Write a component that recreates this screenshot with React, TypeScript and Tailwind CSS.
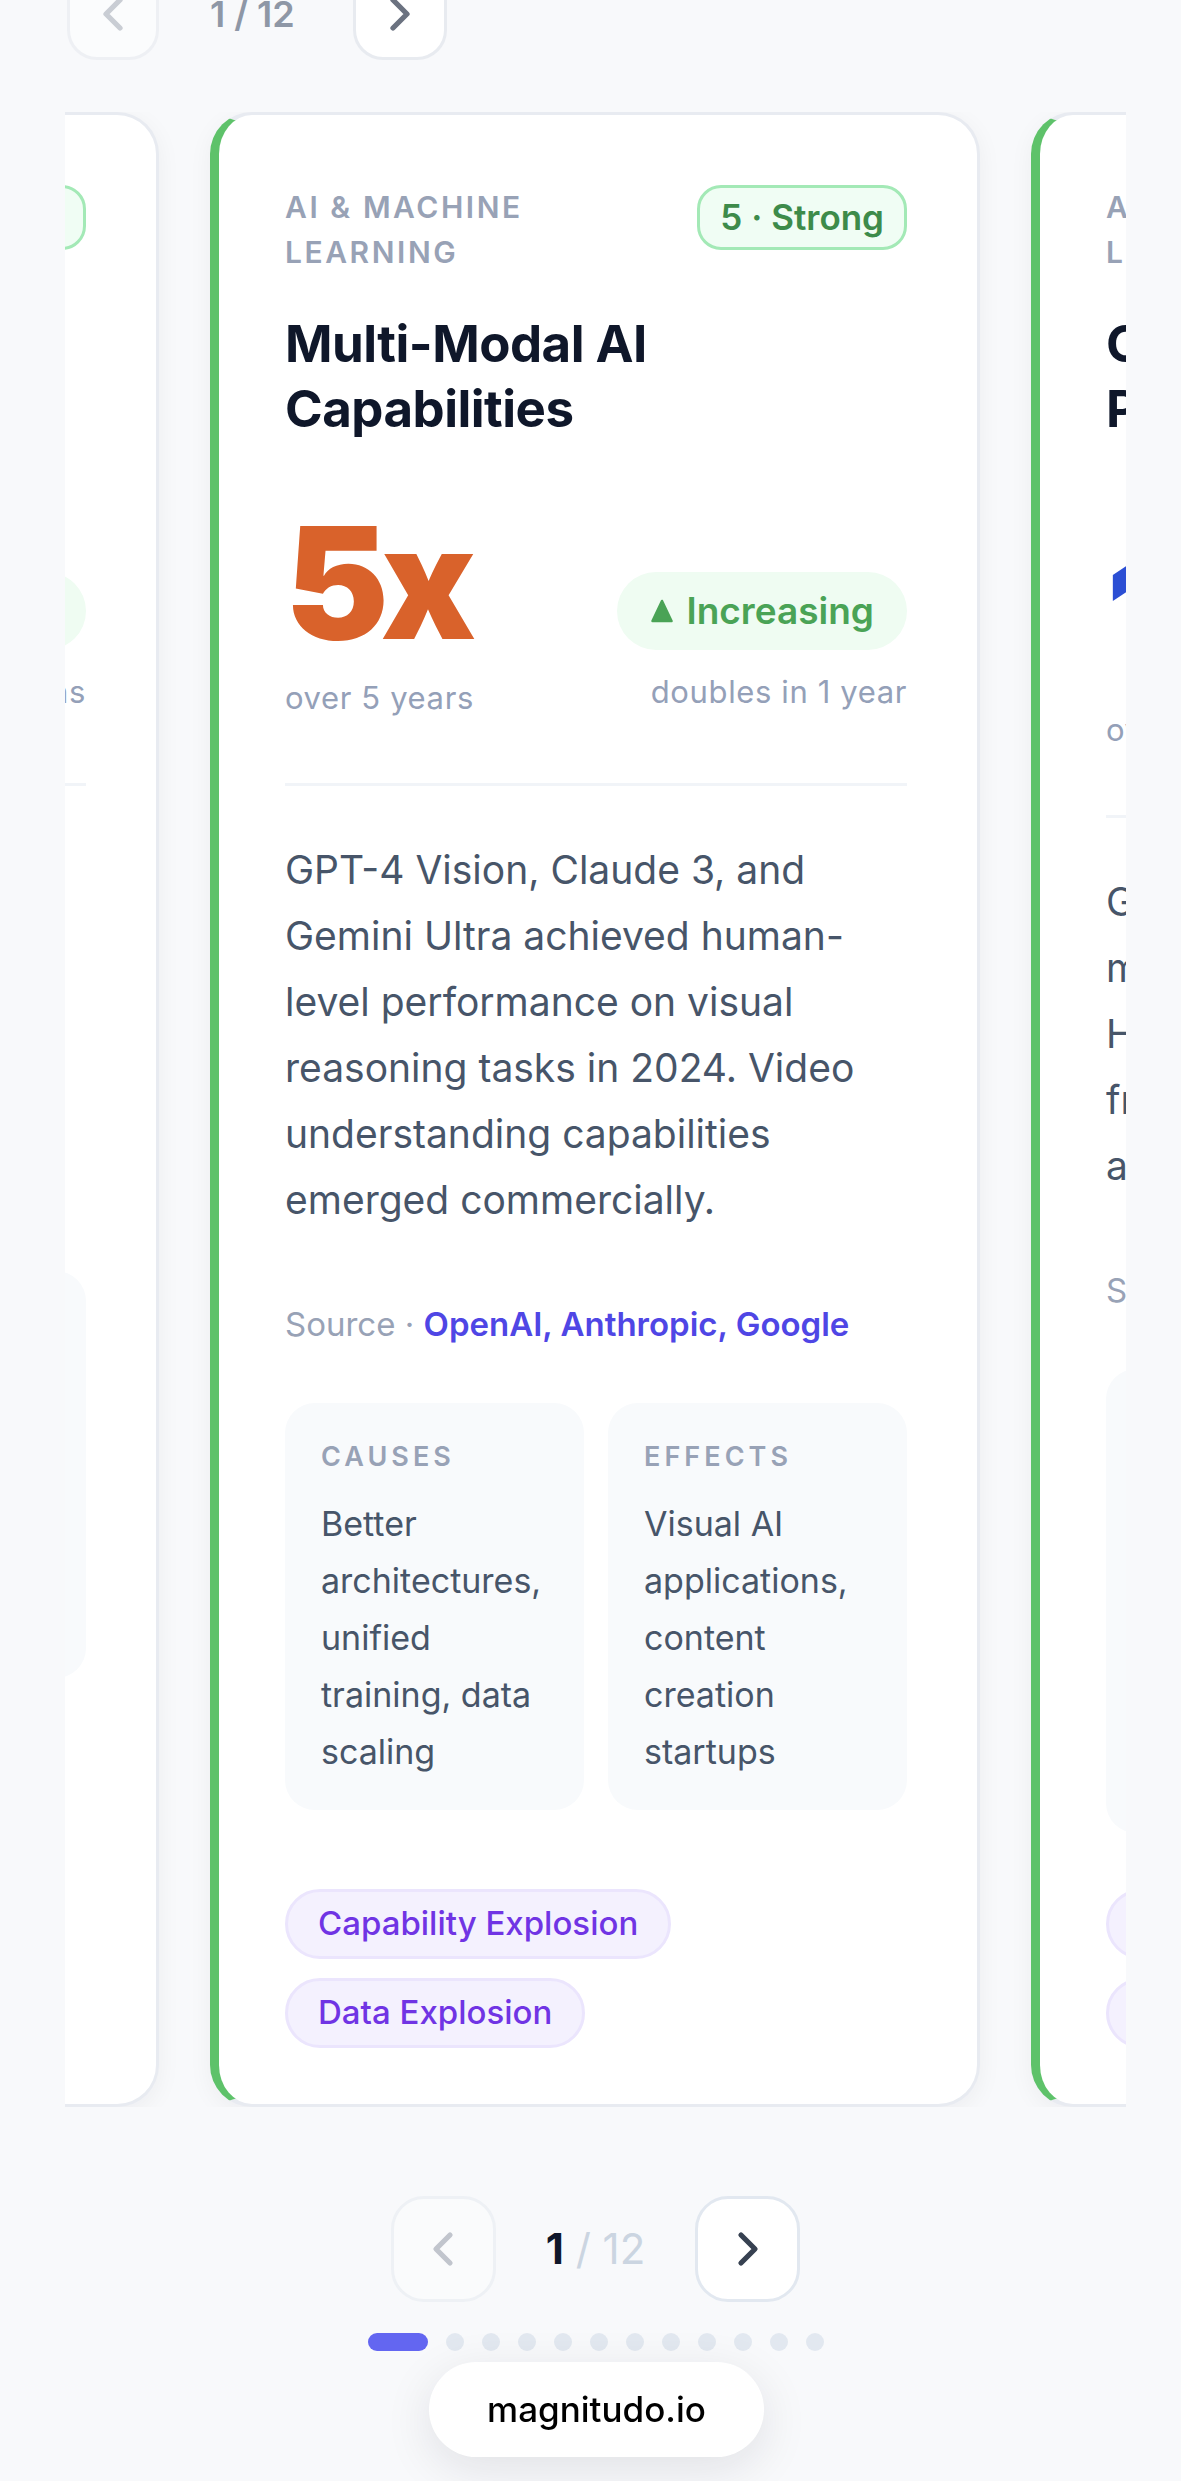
import React from "react";
import { ChevronLeft, ChevronRight } from "lucide-react";

type CardProps = {
  category: string;
  title: string;
  value: string;
  valueClass: string;
  valueSub: string;
  trendSub: string;
  rowClass: string;
  body: React.ReactNode;
  source: string;
  causes: React.ReactNode;
  effects: React.ReactNode;
  tags: string[];
};

function Lines({ items }: { items: string[] }) {
  return (
    <>
      {items.map((l, i) => (
        <React.Fragment key={i}>
          {l}
          {i < items.length - 1 ? <br /> : null}
        </React.Fragment>
      ))}
    </>
  );
}

function Triangle() {
  return (
    <svg width="22" height="24" viewBox="0 0 22 24" className="shrink-0">
      <path d="M11 2 L20.5 22 H1.5 Z" fill="currentColor" stroke="currentColor" strokeWidth="2.5" strokeLinejoin="round" />
    </svg>
  );
}

function Card(p: CardProps) {
  return (
    <div className="w-[770px] h-[1995px] shrink-0 flex flex-col bg-white rounded-[42px] border-[3px] border-[#e8ebf1] border-l-[9px] border-l-[#5ec26a] pl-[66px] pr-[70px] pt-[70px] pb-[56px] shadow-[0_6px_24px_rgba(15,23,42,0.05)]">
      <div className="flex items-start justify-between gap-[24px]">
        <div className="max-w-[330px] text-[30px] leading-[45px] font-semibold tracking-[0.085em] text-[#98a2b6]">
          {p.category}
        </div>
        <div className="h-[65px] px-[20px] flex items-center rounded-[24px] border-[3px] border-[#a3e9b6] bg-[#f0fdf4] text-[35px] font-semibold text-[#3d8b4a] whitespace-nowrap">
          5 · Strong
        </div>
      </div>
      <h2 className="mt-[36px] text-[51px] leading-[65px] font-bold text-[#0f172a] tracking-[-0.01em]">
        {p.title}
      </h2>
      <div className={p.rowClass}>
        <div>
          <div className={p.valueClass}>{p.value}</div>
          <div className="mt-[16px] text-[31px] leading-[42px] tracking-[0.02em] text-[#94a0b8]">{p.valueSub}</div>
        </div>
        <div className="flex flex-col items-end pb-[6px]">
          <div className="h-[78px] pl-[34px] pr-[33px] rounded-full bg-[#effcf2] flex items-center gap-[13px] text-[37px] font-semibold text-[#4aa356] whitespace-nowrap">
            <Triangle />
            Increasing
          </div>
          <div className="mt-[21px] text-[31px] leading-[42px] tracking-[0.02em] text-[#94a0b8] whitespace-nowrap">{p.trendSub}</div>
        </div>
      </div>
      <div className="mt-[64px] h-[3px] bg-[#f1f4f8]" />
      <p className="mt-[51px] text-[39px] leading-[66px] text-[#475569]">{p.body}</p>
      <div className="mt-[69px] text-[33px] leading-[45px] text-[#98a2b6]">
        Source · <span className="font-semibold text-[#4f46e5]">{p.source}</span>
      </div>
      <div className="mt-[56px] flex gap-[24px]">
        <div className="flex-1 rounded-[30px] bg-[#f8fafc] px-[36px] pt-[36px] pb-[30px]">
          <div className="text-[27px] leading-[36px] font-semibold tracking-[0.15em] text-[#98a2b6]">CAUSES</div>
          <div className="mt-[20px] text-[34px] leading-[57px] text-[#475569]">{p.causes}</div>
        </div>
        <div className="flex-1 rounded-[30px] bg-[#f8fafc] px-[36px] pt-[36px] pb-[30px]">
          <div className="text-[27px] leading-[36px] font-semibold tracking-[0.15em] text-[#98a2b6]">EFFECTS</div>
          <div className="mt-[20px] text-[34px] leading-[57px] text-[#475569]">{p.effects}</div>
        </div>
      </div>
      <div className="mt-auto flex flex-wrap gap-x-[18px] gap-y-[19px]">
        {p.tags.map((t) => (
          <div
            key={t}
            className="h-[70px] px-[30px] flex items-center rounded-full border-[3px] border-[#ebe5fd] bg-[#f4f1fe] text-[33px] font-medium text-[#7034e4] whitespace-nowrap"
          >
            {t}
          </div>
        ))}
      </div>
    </div>
  );
}

const cards: CardProps[] = [
  {
    category: "AI & MACHINE LEARNING",
    title: "Open-Source Model Performance",
    value: "3x",
    valueClass: "text-[156px] leading-none font-black tracking-[-0.05em] text-[#d9622b]",
    valueSub: "over 2 years",
    trendSub: "in 2 generations",
    rowClass: "mt-[64px] flex items-end justify-between",
    body: <Lines items={["Llama 3 and Mistral models", "closed most of the gap with", "proprietary systems on key", "public benchmarks."]} />,
    source: "Meta, Mistral AI",
    causes: <Lines items={["Open models,", "community", "tuning,", "better data", "curation"]} />,
    effects: <Lines items={["Cheaper", "deployment,", "local", "inference"]} />,
    tags: ["Capability Explosion", "Data Explosion"],
  },
  {
    category: "AI & MACHINE LEARNING",
    title: "Multi-Modal AI Capabilities",
    value: "5x",
    valueClass: "text-[156px] leading-none font-black tracking-[-0.05em] text-[#d9622b]",
    valueSub: "over 5 years",
    trendSub: "doubles in 1 year",
    rowClass: "mt-[64px] flex items-end justify-between",
    body:
      "GPT-4 Vision, Claude 3, and Gemini Ultra achieved human-level performance on visual reasoning tasks in 2024. Video understanding capabilities emerged commercially.",
    source: "OpenAI, Anthropic, Google",
    causes: "Better architectures, unified training, data scaling",
    effects: "Visual AI applications, content creation startups",
    tags: ["Capability Explosion", "Data Explosion"],
  },
  {
    category: "AI & MACHINE LEARNING",
    title: "Generative AI Productivity",
    value: "10x",
    valueClass: "text-[156px] leading-none font-black tracking-[-0.05em] text-[#2c4fd4]",
    valueSub: "over 3 years",
    trendSub: "doubles in 2 years",
    rowClass: "mt-[96px] flex items-end justify-between",
    body: <Lines items={["GitHub Copilot and Cursor let", "millions of developers ship", "How teams write code shifted", "from typing to reviewing", "and orchestrating agents."]} />,
    source: "GitHub, McKinsey",
    causes: <Lines items={["Code", "assistants,", "chat", "interfaces,", "IDE plugins,", "agent tools"]} />,
    effects: <Lines items={["Faster", "shipping, new", "team", "structures"]} />,
    tags: ["Capability Explosion", "Data Explosion"],
  },
];

export default function App() {
  return (
    <div className="relative min-h-[2481px] bg-[#f8f9fb] overflow-hidden font-['Inter',sans-serif]">
      {/* top pagination (partly scrolled off) */}
      <div className="-mt-[32px] h-[92px] flex items-center pl-[67px]">
        <button className="w-[92px] h-[92px] rounded-[30px] border-[3px] border-[#eef0f4] bg-[#fbfcfd] flex items-center justify-center">
          <ChevronLeft size={56} strokeWidth={2.25} className="text-[#c9cdd4]" />
        </button>
        <div className="ml-[51px] text-[36px] font-semibold text-[#8e97a6]">1 / 12</div>
        <button className="ml-[58px] w-[94px] h-[92px] rounded-[30px] border-[3px] border-[#e8ebf0] bg-white flex items-center justify-center">
          <ChevronRight size={56} strokeWidth={2.25} className="text-[#6b7280]" />
        </button>
      </div>

      {/* carousel viewport */}
      <div className="mt-[52px] ml-[65px] w-[1061px] overflow-hidden">
        <div className="flex gap-[51px] -translate-x-[676px]">
          {cards.map((c, i) => (
            <Card key={i} {...c} />
          ))}
        </div>
      </div>

      {/* bottom pagination */}
      <div className="ml-[65px] w-[1061px] flex flex-col items-center">
        <div className="mt-[89px] flex items-center">
          <button className="w-[105px] h-[106px] rounded-[33px] border-[3px] border-[#eef1f5] bg-[#fafbfc] flex items-center justify-center">
            <ChevronLeft size={56} strokeWidth={2.25} className="text-[#c1c5cd]" />
          </button>
          <div className="mx-[50px] text-[42px] leading-none whitespace-nowrap">
            <span className="font-bold text-[#0f172a]">1</span>
            <span className="text-[#cbd5e1]"> / 12</span>
          </div>
          <button className="w-[105px] h-[106px] rounded-[33px] border-[3px] border-[#e2e8f0] bg-white flex items-center justify-center">
            <ChevronRight size={56} strokeWidth={2.25} className="text-[#374151]" />
          </button>
        </div>
        <div className="mt-[31px] flex items-center gap-[18px]">
          <div className="w-[60px] h-[18px] rounded-full bg-[#6366f1]" />
          {Array.from({ length: 11 }).map((_, i) => (
            <div key={i} className="w-[18px] h-[18px] rounded-full bg-[#e2e8f0]" />
          ))}
        </div>
      </div>

      {/* floating badge */}
      <div className="fixed bottom-[24px] left-[429px] w-[335px] h-[95px] rounded-full bg-white shadow-[0_12px_48px_rgba(15,23,42,0.10)] flex items-center justify-center text-[35px] font-medium text-black">
        magnitudo.io
      </div>
    </div>
  );
}
